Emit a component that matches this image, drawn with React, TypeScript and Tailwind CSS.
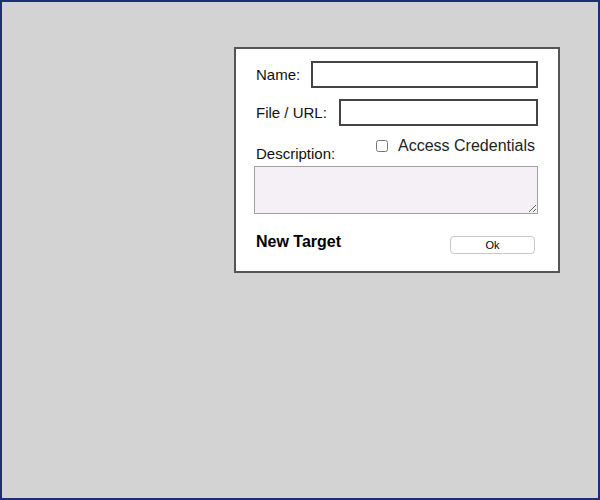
import { FC } from "react";

const App: FC = () => {
  return (
    <div
      className="w-[600px] h-[500px] border-2 border-[#1c2f76] bg-[#d3d3d3] pl-[232px] pt-[45px]"
      style={{ fontFamily: '"Liberation Sans", Arial, sans-serif' }}
    >
      {/* New target dialog */}
      <div className="w-[326px] h-[226px] border-2 border-[#555555] bg-white pl-[18px] pr-[20px] pt-[12px] flex flex-col">
        <div className="flex items-center justify-between">
          <label className="ml-[2px] text-[15px] leading-[17px] text-[#111]">Name:</label>
          <input type="text" className="w-[227px] h-[27px] border-2 border-[#444444] bg-white outline-none" />
        </div>
        <div className="flex items-center justify-between mt-[11px]">
          <label className="ml-[2px] text-[15px] leading-[17px] text-[#111]">File / URL:</label>
          <input type="text" className="w-[199px] h-[27px] border-2 border-[#444444] bg-white outline-none" />
        </div>
        <div className="flex items-end justify-between h-[36px]">
          <label className="ml-[2px] text-[15px] leading-[17px] text-[#111]">Description:</label>
          <div className="flex items-center mb-[7px] mr-[3px]">
            <input type="checkbox" className="w-[12px] h-[12px]" />
            <span className="ml-[10px] text-[16px] leading-[18px] text-[#222]">Access Credentials</span>
          </div>
        </div>
        <textarea className="mt-[4px] h-[48px] w-full border border-[#a0a0a0] bg-[#f4f0f5] outline-none" />
        <div className="flex items-start justify-between mt-[19px]">
          <span className="ml-[2px] text-[16px] leading-[18px] font-bold text-black">New Target</span>
          <button className="mt-[3px] mr-[3px] w-[85px] h-[18px] border border-[#c8c8c8] rounded-[4px] bg-white text-[11px] leading-[16px] text-black">
            Ok
          </button>
        </div>
      </div>
    </div>
  );
};

export default App;
